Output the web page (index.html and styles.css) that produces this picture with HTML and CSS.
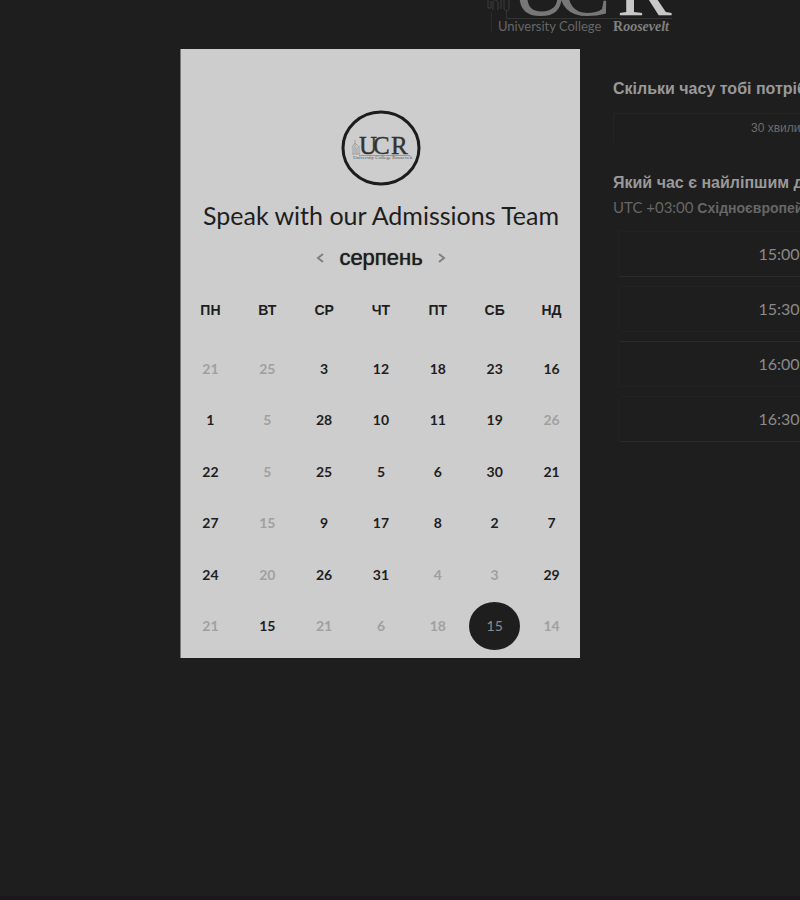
FILE: index.html
```html
<!DOCTYPE html>
<html lang="uk">
<head>
<meta charset="utf-8">
<meta name="viewport" content="width=device-width, initial-scale=1">
<title>Speak with our Admissions Team</title>
<link rel="stylesheet" href="styles.css">
</head>
<body>
<div class="page">
  <header class="header">
    <svg class="brand" viewBox="0 0 190 49" role="img" aria-label="University College Roosevelt">
      <g fill="none" stroke="#3c3c3c">
        <path d="M4 0v8h3V1M9 10V2q3-4 5 0v8M17 0v9M20 0v9q3 4 5 0V0" stroke-width="1"/>
        <path d="M7.500 12v20" stroke="#2b2b2b"/>
        <path d="M22.500 10v8.500H188" stroke="#343434"/>
      </g>
      <g class="brand-letters">
        <text x="27" y="15" fill="#777">U</text>
        <text x="72" y="15" fill="#777">C</text>
        <text x="133" y="15" fill="#c8c8c8">R</text>
      </g>
      <text class="brand-name" x="14" y="31">University College</text>
      <text class="brand-name brand-name-accent" x="129" y="31">R<tspan font-style="italic">oosevelt</tspan></text>
    </svg>
  </header>
  <main class="booking">
    <section class="card">
      <svg class="badge" viewBox="0 0 80 76" role="img" aria-label="UCR">
        <ellipse cx="40" cy="38" rx="38" ry="36" fill="none" stroke="#1c1c1c" stroke-width="3"/>
        <path d="M14 30v14M12 37v7M16 37v7M18 36v8M11 37l3-4 4 4M11 44h8" fill="none" stroke="#a0a0a0"/>
        <path d="M18 45.500h51" stroke="#999"/>
        <g class="badge-letters">
          <text x="18" y="44">U</text>
          <text x="32" y="44">C</text>
          <text x="50" y="44">R</text>
        </g>
        <text class="badge-name" x="12" y="49">University College Roosevelt</text>
      </svg>
      <h1 class="title">Speak with our Admissions Team</h1>
      <div class="month">
        <button class="arrow" type="button" aria-label="Попередній місяць"><svg viewBox="0 0 10 14"><path d="M8 3 3 7l5 4"/></svg></button>
        <h2 class="month-name">серпень</h2>
        <button class="arrow" type="button" aria-label="Наступний місяць"><svg viewBox="0 0 10 14"><path d="M2 3 7 7l-5 4"/></svg></button>
      </div>
      <table class="calendar">
        <thead><tr><th>ПН</th><th>ВТ</th><th>СР</th><th>ЧТ</th><th>ПТ</th><th>СБ</th><th>НД</th></tr></thead>
        <tbody>
          <tr><td><button class="day" disabled>21</button></td><td><button class="day" disabled>25</button></td><td><button class="day">3</button></td><td><button class="day">12</button></td><td><button class="day">18</button></td><td><button class="day">23</button></td><td><button class="day">16</button></td></tr>
          <tr><td><button class="day">1</button></td><td><button class="day" disabled>5</button></td><td><button class="day">28</button></td><td><button class="day">10</button></td><td><button class="day">11</button></td><td><button class="day">19</button></td><td><button class="day" disabled>26</button></td></tr>
          <tr><td><button class="day">22</button></td><td><button class="day" disabled>5</button></td><td><button class="day">25</button></td><td><button class="day">5</button></td><td><button class="day">6</button></td><td><button class="day">30</button></td><td><button class="day">21</button></td></tr>
          <tr><td><button class="day">27</button></td><td><button class="day" disabled>15</button></td><td><button class="day">9</button></td><td><button class="day">17</button></td><td><button class="day">8</button></td><td><button class="day">2</button></td><td><button class="day">7</button></td></tr>
          <tr><td><button class="day">24</button></td><td><button class="day" disabled>20</button></td><td><button class="day">26</button></td><td><button class="day">31</button></td><td><button class="day" disabled>4</button></td><td><button class="day" disabled>3</button></td><td><button class="day">29</button></td></tr>
          <tr><td><button class="day" disabled>21</button></td><td><button class="day">15</button></td><td><button class="day" disabled>21</button></td><td><button class="day" disabled>6</button></td><td><button class="day" disabled>18</button></td><td><button class="day day-selected" aria-pressed="true">15</button></td><td><button class="day" disabled>14</button></td></tr>
        </tbody>
      </table>
    </section>
    <section class="panel">
      <h2 class="question">Скільки часу тобі потрібно?</h2>
      <button class="duration" type="button">30 хвилин</button>
      <h2 class="question">Який час є найліпшим для тебе?</h2>
      <p class="zone">UTC +03:00 <b>Східноєвропейський час</b></p>
      <div class="slots">
        <button class="slot" type="button">15:00</button>
        <button class="slot" type="button">15:30</button>
        <button class="slot" type="button">16:00</button>
        <button class="slot" type="button">16:30</button>
      </div>
    </section>
  </main>
</div>
</body>
</html>
```
FILE: styles.css
```css
* { box-sizing: border-box; }

body {
  margin: 0;
  background: #1e1e1e;
  color: #1e1e1e;
  font-family: Lato, "Liberation Sans", sans-serif;
}

h1, h2, p { margin: 0; }

button {
  padding: 0;
  border: 0;
  background: none;
  color: inherit;
  font: inherit;
}

.page {
  min-height: 100vh;
  overflow: hidden;
  border-bottom: 4px solid #1c151b;
}

.header { padding-left: 484px; }

.brand {
  display: block;
  width: 190px;
  height: 49px;
}

.brand-letters { font: 82px "Liberation Serif", serif; }

.brand-name {
  font: 13px Lato, sans-serif;
  fill: #666;
}

.brand-name-accent {
  font: bold 14px "Liberation Serif", serif;
  fill: #808080;
}

.booking {
  display: flex;
  align-items: flex-start;
  gap: 33px;
  padding-left: 180px;
}

.card {
  flex: 0 0 400px;
  padding: 61px 0 7px 1px;
  border-left: 1px solid #777;
  background: #cdcdcd;
}

.badge {
  display: block;
  width: 80px;
  height: 76px;
  margin: 0 auto;
}

.badge-letters {
  font: 25px "Liberation Serif", serif;
  fill: #333;
  stroke: #333;
  stroke-width: 0.4px;
}

.badge-name {
  font: 5px "Liberation Serif", serif;
  fill: #555;
}

.title {
  margin-top: 14px;
  font-size: 25px;
  font-weight: 400;
  line-height: 30px;
  text-align: center;
  white-space: nowrap;
}

.month {
  display: flex;
  align-items: center;
  justify-content: center;
  gap: 14px;
  height: 30px;
  margin-top: 13px;
}

.month-name {
  font: 400 22px/30px "Liberation Sans", sans-serif;
  text-shadow: 0 0 1px #1e1e1e;
}

.arrow svg {
  display: block;
  width: 10px;
  height: 14px;
  fill: none;
  stroke: #808080;
  stroke-width: 2;
}

.calendar {
  width: 100%;
  table-layout: fixed;
  border-collapse: collapse;
  text-align: center;
}

.calendar th {
  height: 69px;
  padding: 5px 0 0;
  font: bold 14px/20px "Liberation Sans", sans-serif;
}

.calendar td {
  height: 52px;
  padding: 0;
}

.calendar tr:nth-child(even) td { height: 51px; }

.day {
  width: 51px;
  height: 48px;
  border-radius: 50%;
  font-size: 14px;
  font-weight: 700;
}

.day:disabled { color: #a0a0a0; }

.day-selected {
  background: #1e1e1e;
  color: #8c8c8c;
  font-weight: 400;
}

.panel {
  flex: 0 0 332px;
  padding-top: 30px;
  color: #999;
}

.question {
  font: bold 16px/20px "Liberation Sans", sans-serif;
  white-space: nowrap;
}

.duration {
  display: block;
  width: 100%;
  height: 30px;
  margin: 14px 0 30px;
  border: 1px solid #252525;
  border-bottom-color: transparent;
  color: #6c6c6c;
  font: 12px "Liberation Sans", sans-serif;
}

.zone {
  margin-top: 4px;
  color: #666;
  font-size: 15px;
  line-height: 20px;
  white-space: nowrap;
}

.zone b {
  font: bold 14px "Liberation Sans", sans-serif;
}

.slots {
  display: grid;
  gap: 9px;
  padding: 14px 5px 0;
}

.slot {
  height: 46px;
  padding-bottom: 2px;
  border: 1px solid #222;
  border-radius: 3px;
  color: #8a8a8a;
  font-size: 16px;
}

.slot:nth-child(1),
.slot:nth-child(4) { border-bottom-color: #2a2a2a; }

.slot:nth-child(3) { border-top-color: #2a2a2a; }
```
